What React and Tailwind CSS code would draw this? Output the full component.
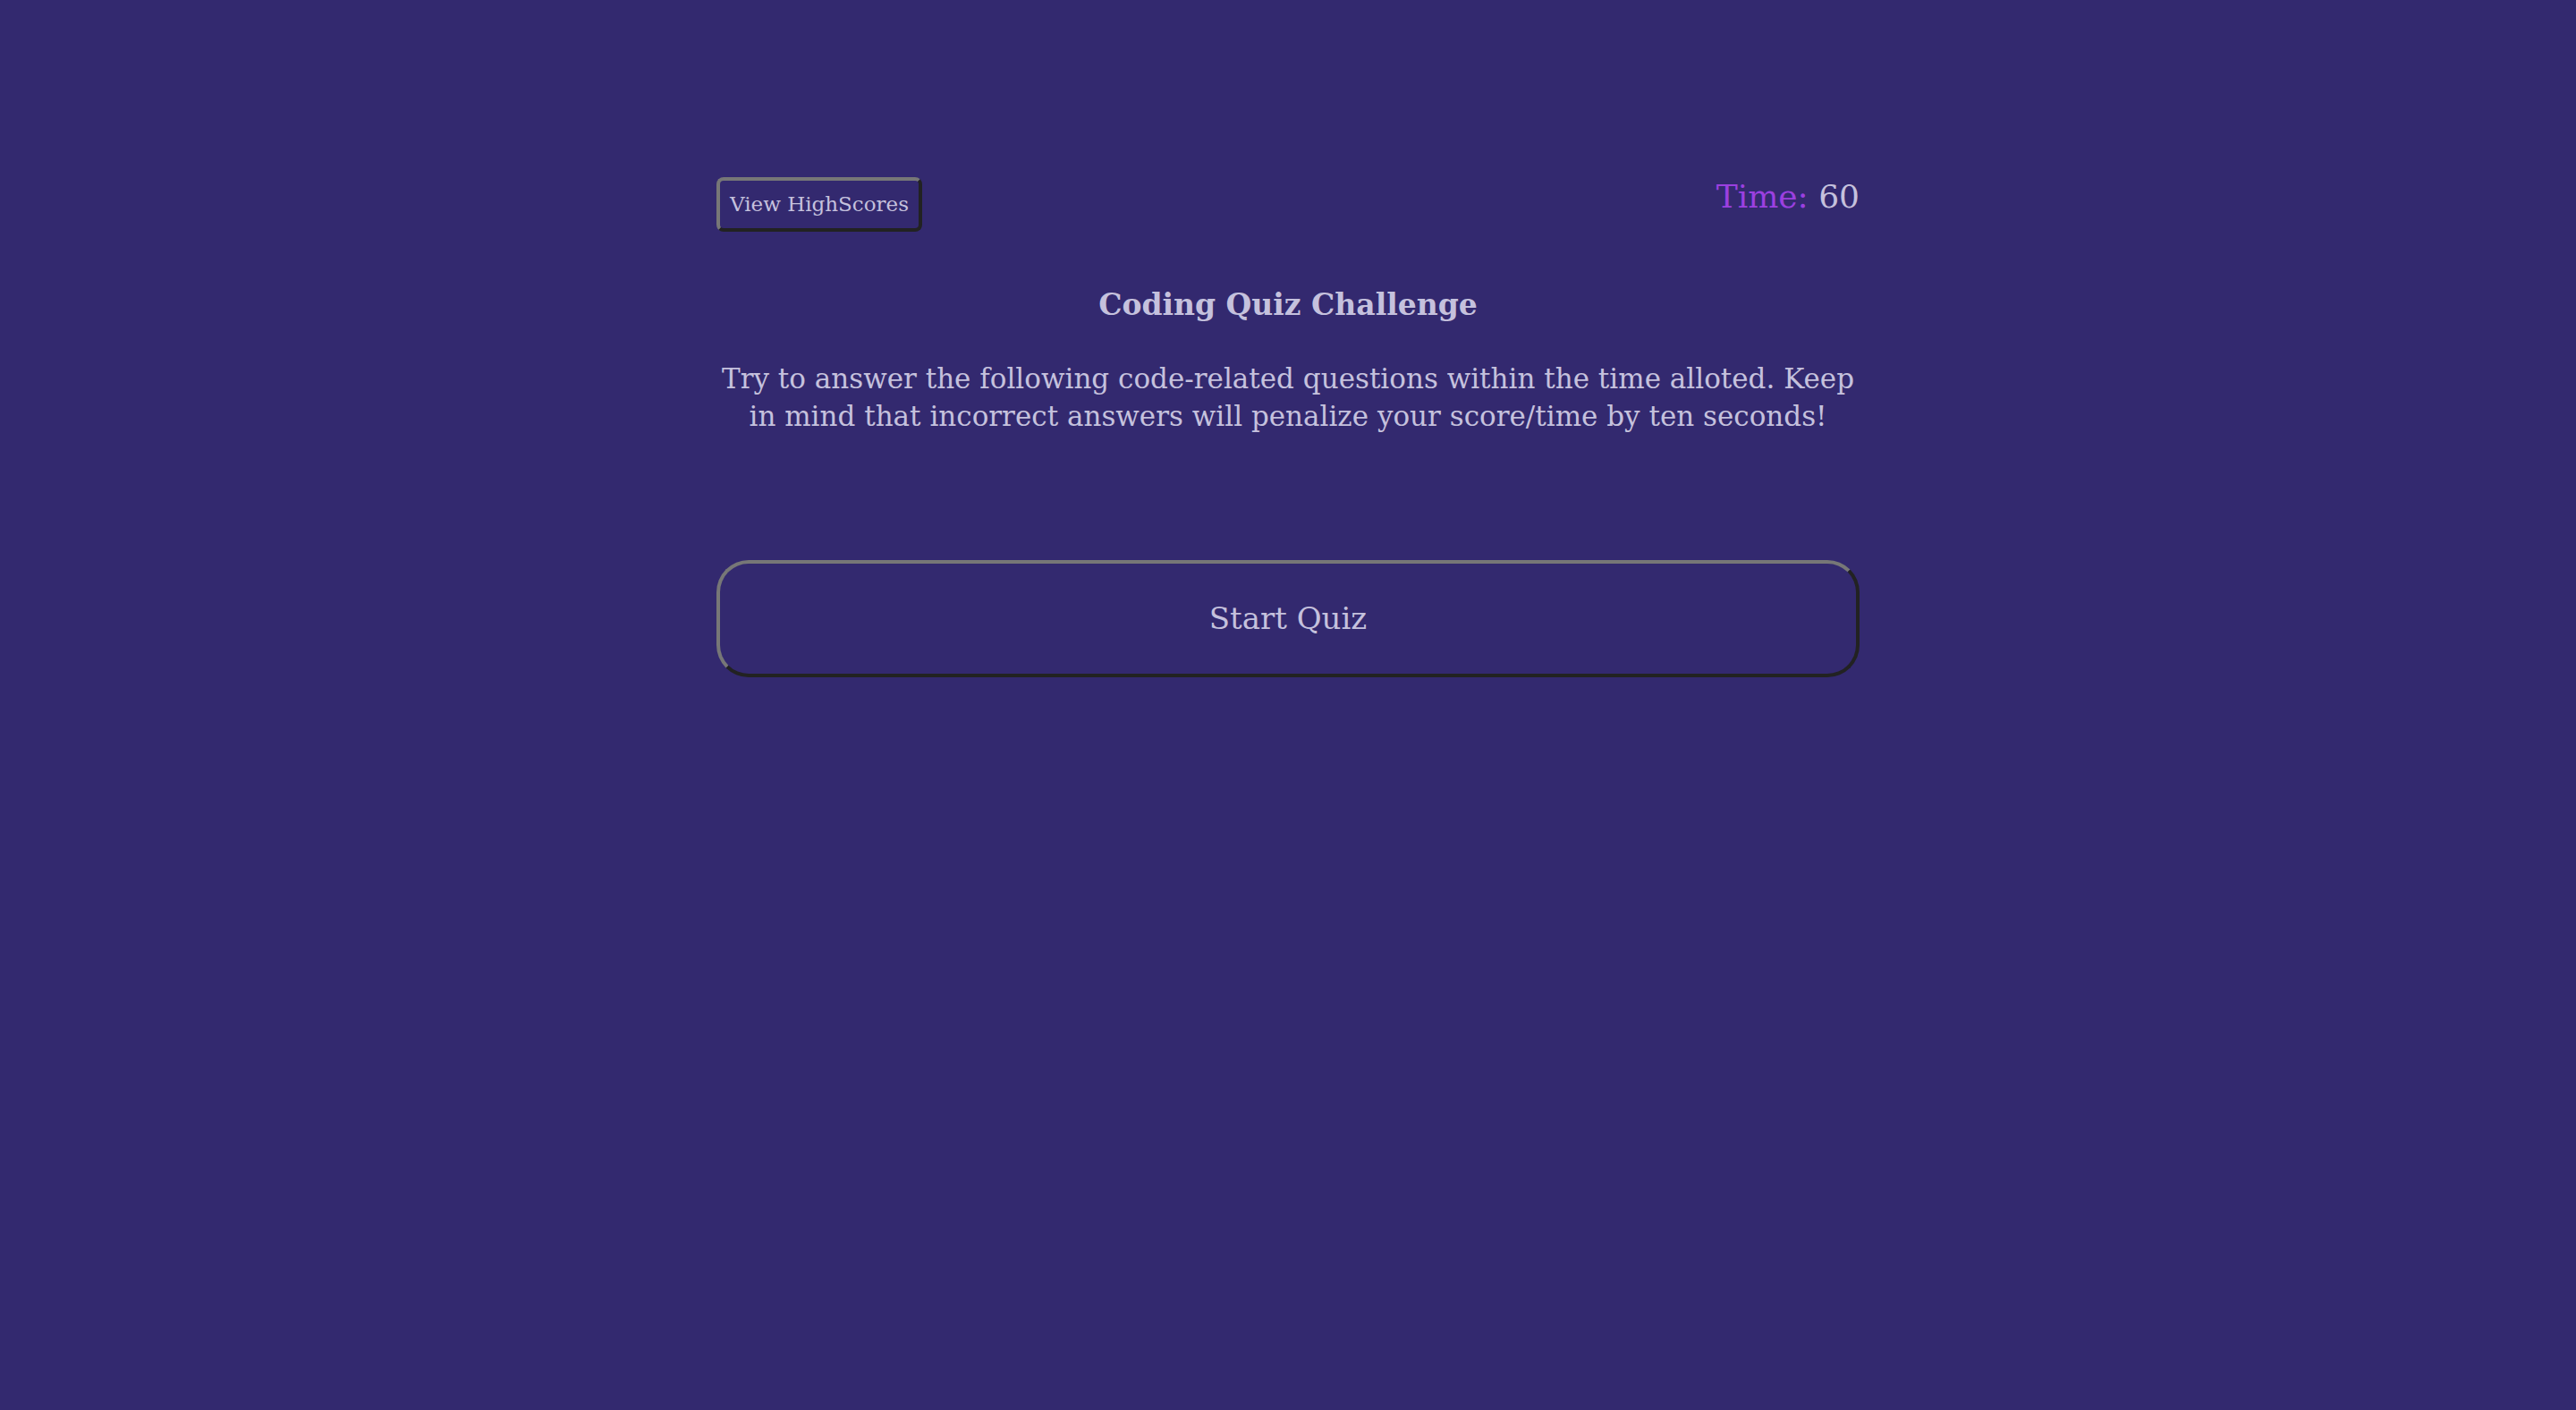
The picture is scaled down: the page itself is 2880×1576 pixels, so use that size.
export default function App() {
  const serif = { fontFamily: '"DejaVu Serif", "Liberation Serif", serif' };
  return (
    <div className="min-h-[1576px] w-full bg-[#33296f] text-[#c5c1dd]" style={serif}>
      <div className="mx-auto w-[1278px] pt-[198px]">
        <div className="flex items-start justify-between">
          <button className="h-[61px] w-[230px] rounded-[8px] border-[4px] border-t-[#777777] border-l-[#777777] border-b-[#222222] border-r-[#222222] bg-transparent text-[23px] text-[#c5c1dd]">
            View HighScores
          </button>
          <div className="mt-[2px] text-[36px] leading-[40px]">
            <span className="text-[#9b40e0]">Time:</span> <span>60</span>
          </div>
        </div>
        <h1 className="mt-[62px] text-center text-[33px] font-bold leading-[40px]">Coding Quiz Challenge</h1>
        <p className="mt-[41px] px-[4px] text-center text-[31px] leading-[42px]">
          Try to answer the following code-related questions within the time alloted. Keep in mind that incorrect answers will penalize your score/time by ten seconds!
        </p>
        <button className="mt-[140px] h-[131px] w-full rounded-[36px] border-[4px] border-t-[#777777] border-l-[#777777] border-b-[#222222] border-r-[#222222] bg-transparent text-[34px] text-[#c5c1dd]">
          Start Quiz
        </button>
      </div>
    </div>
  );
}
